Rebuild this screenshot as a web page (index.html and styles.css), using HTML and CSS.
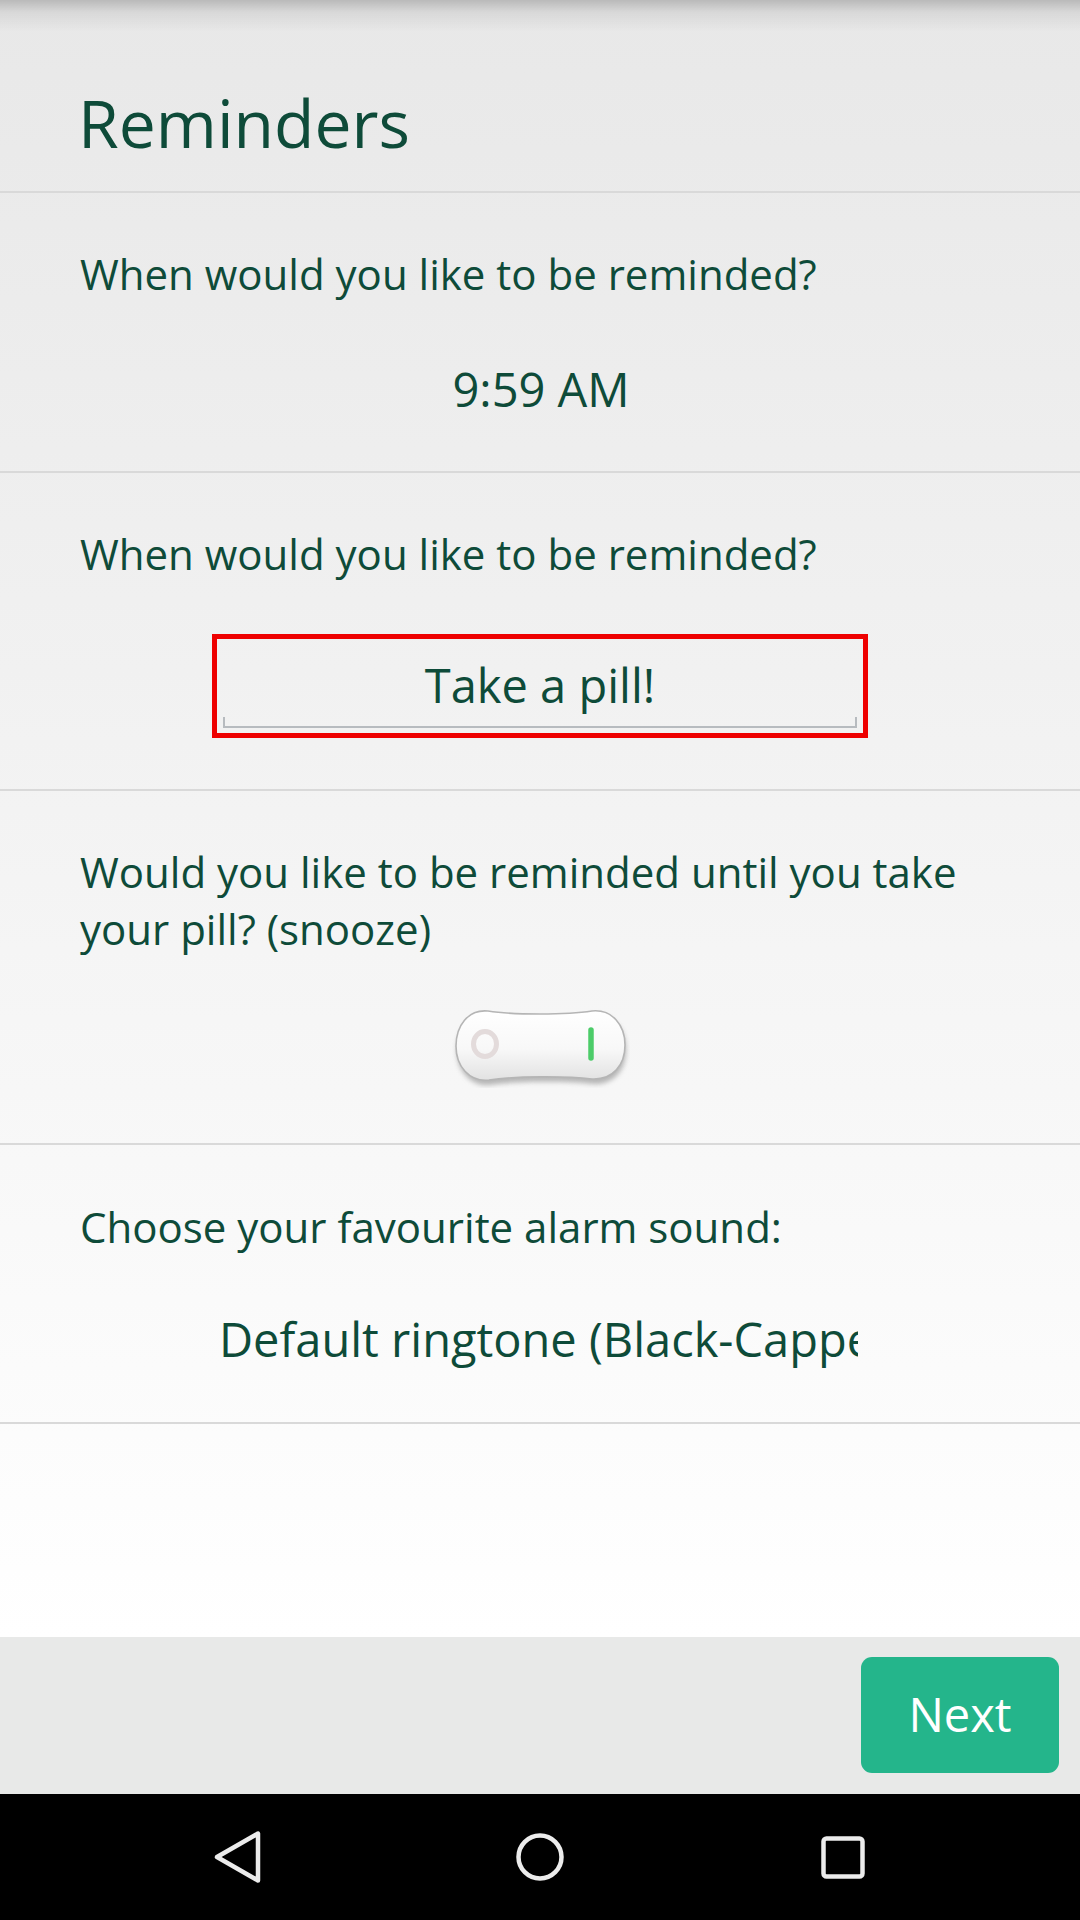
FILE: index.html
```html
<!DOCTYPE html>
<html lang="en">
<head>
<meta charset="utf-8">
<title>Reminders</title>
<link rel="stylesheet" href="styles.css">
</head>
<body>
<div class="app">
  <main class="main">
    <header class="header">
      <h1 class="title">Reminders</h1>
    </header>

    <section class="section s1">
      <p class="label">When would you like to be reminded?</p>
      <div class="value time">9:59 AM</div>
    </section>

    <section class="section s2">
      <p class="label">When would you like to be reminded?</p>
      <div class="highlight">
        <div class="edittext">
          <div class="edit-value">Take a pill!</div>
          <div class="edit-underline"></div>
        </div>
      </div>
    </section>

    <section class="section s3">
      <p class="label">Would you like to be reminded until you take your pill? (snooze)</p>
      <div class="toggle-wrap">
        <svg class="toggle" width="178" height="82" viewBox="0 0 178 82" aria-label="snooze switch">
          <defs>
            <linearGradient id="tbody" x1="0" y1="0" x2="0" y2="1">
              <stop offset="0" stop-color="#ffffff"/>
              <stop offset="0.55" stop-color="#f8f8f8"/>
              <stop offset="1" stop-color="#e2e2e2"/>
            </linearGradient>
            <filter id="tshadow" x="-10%" y="-20%" width="120%" height="150%">
              <feGaussianBlur stdDeviation="2.4"/>
            </filter>
            <filter id="glow" x="-200%" y="-50%" width="500%" height="200%">
              <feGaussianBlur stdDeviation="1.6"/>
            </filter>
          </defs>
          <path d="M38 10 C62 13 114 13 140 9 C160 7 174 23 174 44 C174 64 162 79 141 78 C115 75 63 75 38 79 C18 81 5 64 5 45 C5 25 18 8 38 10 Z" fill="#8a8a8a" opacity="0.6" filter="url(#tshadow)"/>
          <path d="M36 5 C61 9 115 9 140 5 C160 3 173 19 173 39 C173 59 161 74 140 73 C115 70 63 70 37 74 C17 76 4 60 4 40 C4 20 16 3 36 5 Z" fill="url(#tbody)" stroke="#b5b5b5" stroke-width="1.6"/>
          <ellipse cx="33" cy="38" rx="11.5" ry="12.5" fill="none" stroke="#e3dbdb" stroke-width="5"/>
          <line x1="139" y1="24" x2="139" y2="52" stroke="#7fe49a" stroke-width="8" stroke-linecap="round" filter="url(#glow)" opacity="0.8"/>
          <line x1="139" y1="24" x2="139" y2="52" stroke="#4ccc69" stroke-width="5.5" stroke-linecap="round"/>
        </svg>
      </div>
    </section>

    <section class="section s4">
      <p class="label">Choose your favourite alarm sound:</p>
      <div class="ringtone"><span>Default ringtone (Black-Capped Chickadee)</span></div>
    </section>
  </main>

  <footer class="footer">
    <button class="next" type="button">Next</button>
  </footer>

  <nav class="navbar">
    <svg class="nav-icon" width="60" height="60" viewBox="0 0 60 60" aria-label="Back">
      <path d="M10 30 L51 6.5 L51 53.5 Z" fill="none" stroke="#ececec" stroke-width="4.5" stroke-linejoin="round"/>
    </svg>
    <svg class="nav-icon" width="60" height="60" viewBox="0 0 60 60" aria-label="Home">
      <circle cx="30" cy="30" r="21.5" fill="none" stroke="#ececec" stroke-width="4.5"/>
    </svg>
    <svg class="nav-icon" width="60" height="60" viewBox="0 0 60 60" aria-label="Recents">
      <rect x="10.5" y="11.5" width="39" height="38" rx="3" fill="none" stroke="#ececec" stroke-width="4.5"/>
    </svg>
  </nav>
</div>
</body>
</html>
```

FILE: styles.css
```css
* {
  box-sizing: border-box;
}

html, body {
  margin: 0;
  padding: 0;
}

body {
  width: 1080px;
  height: 1920px;
  overflow: hidden;
  font-family: "Open Sans", "Noto Sans", "Liberation Sans", sans-serif;
  color: #0e4b39;
}

.app {
  display: flex;
  flex-direction: column;
  height: 1920px;
}

.main {
  height: 1637px;
  display: flex;
  flex-direction: column;
  background:
    linear-gradient(to bottom, rgba(0, 0, 0, 0.2) 0px, rgba(0, 0, 0, 0.07) 12px, rgba(0, 0, 0, 0) 32px),
    linear-gradient(to bottom, #e8e8e8 0px, #f0f0f0 600px, #fafafa 1300px, #ffffff 1637px);
}

.header {
  height: 193px;
  padding: 77px 0 0 78px;
  border-bottom: 2px solid #d9d9d9;
}

.title {
  margin: 0;
  font-size: 66px;
  font-weight: 400;
  line-height: 90px;
}

.section {
  display: flex;
  flex-direction: column;
  border-bottom: 2px solid #d9d9d9;
}

.label {
  margin: 0;
  padding: 0 80px;
  font-size: 42px;
  line-height: 57px;
}

.value {
  font-size: 47px;
  line-height: 64px;
  text-align: center;
}

.s1 {
  height: 280px;
  padding-top: 52px;
}

.s1 .time {
  margin-top: 55px;
  padding-left: 2px;
}

.s2 {
  height: 318px;
  padding-top: 52px;
}

.highlight {
  margin: 52px auto 0;
  width: 656px;
  height: 104px;
  border: 5px solid #ee0000;
  padding: 14px 6px 5px;
}

.edit-value {
  font-size: 47px;
  line-height: 64px;
  text-align: center;
}

.edit-underline {
  height: 11px;
  border: 2px solid #b7bbbf;
  border-top: none;
}

.s3 {
  height: 354px;
  padding-top: 52px;
}

.s3 .label {
  padding-right: 90px;
}

.toggle-wrap {
  display: flex;
  justify-content: center;
  margin-top: 49px;
  padding-left: 2px;
}

.toggle {
  display: block;
}

.s4 {
  height: 279px;
  padding-top: 53px;
}

.ringtone {
  margin: 52px 0 0 219px;
  width: 639px;
  overflow: hidden;
  white-space: nowrap;
  font-size: 47px;
  line-height: 64px;
}

.footer {
  height: 157px;
  background: #e8e9e8;
  display: flex;
  justify-content: flex-end;
  align-items: flex-start;
  padding: 20px 21px 0 0;
}

.next {
  width: 198px;
  height: 116px;
  border: none;
  border-radius: 11px;
  background: #24b58b;
  color: #ffffff;
  font-family: "Open Sans", "Noto Sans", "Liberation Sans", sans-serif;
  font-size: 47px;
  line-height: 1;
  padding: 0 0 2px;
}

.navbar {
  height: 126px;
  background: #000000;
  display: flex;
  justify-content: center;
  align-items: center;
  gap: 243px;
}

.nav-icon {
  display: block;
}
```
